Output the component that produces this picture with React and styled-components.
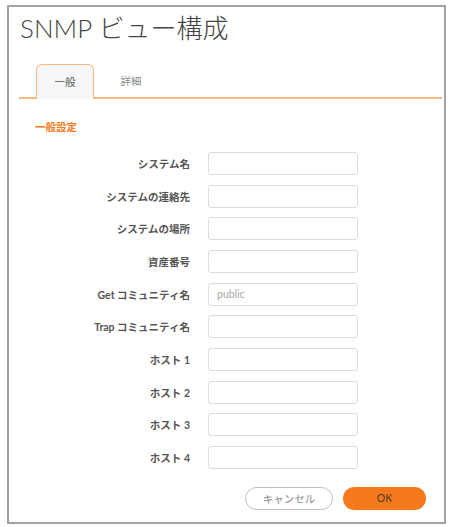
import React from "react";
import styled, { createGlobalStyle } from "styled-components";

const Global = createGlobalStyle`
  html, body { margin: 0; padding: 0; background: #fff; }
  body { font-family: "Lato", "Noto Sans CJK JP", sans-serif; }
`;

const Frame = styled.div`
  box-sizing: border-box;
  margin: 5px 0 0 7px;
  width: 439px;
  height: 519px;
  border: 2px solid #a2a2a2;
  background: #fff;
  display: flex;
  flex-direction: column;
`;

const Title = styled.h1`
  margin: 5px 0 0 11px;
  font-family: "Lato", "Noto Sans CJK JP", sans-serif;
  font-weight: 300;
  font-size: 26px;
  line-height: 32px;
  color: #444;
`;

const TabBar = styled.div`
  margin: 20px 2px 0 10px;
  padding-left: 17px;
  display: flex;
  align-items: flex-end;
  border-bottom: 2px solid #fbb684;
  height: 33px;
`;

const Tab = styled.div`
  box-sizing: border-box;
  width: 58px;
  height: ${(p) => (p.$active ? "35px" : "33px")};
  margin-bottom: ${(p) => (p.$active ? "-2px" : "0")};
  display: flex;
  align-items: center;
  justify-content: center;
  padding-bottom: ${(p) => (p.$active ? "2px" : "0")};
  font-family: "Noto Sans CJK JP", sans-serif;
  font-size: 10.5px;
  color: ${(p) => (p.$active ? "#555" : "#8a8a8a")};
  background: ${(p) => (p.$active ? "#f7f7f7" : "transparent")};
  border: ${(p) => (p.$active ? "1.5px solid #fbb684" : "none")};
  border-bottom: none;
  border-radius: 6px 6px 0 0;
  margin-right: 8px;
`;

const SectionTitle = styled.div`
  margin: 21px 0 0 26px;
  font-family: "Noto Sans CJK JP", sans-serif;
  font-weight: 700;
  font-size: 10.5px;
  line-height: 14px;
  color: #f47b20;
`;

const Form = styled.div`
  margin-top: 18px;
  display: grid;
  grid-template-columns: 181px 150px;
  column-gap: 18px;
  row-gap: 9.67px;
  align-items: center;
`;

const Label = styled.label`
  text-align: right;
  font-family: "Lato", "Noto Sans CJK JP", sans-serif;
  font-weight: 700;
  font-size: 10.5px;
  color: #555;
  white-space: nowrap;
`;

const Input = styled.input`
  box-sizing: border-box;
  width: 150px;
  height: 23px;
  border: 1px solid #dcdcdc;
  border-radius: 3px;
  padding: 0 8px;
  font-family: "Lato", "Noto Sans CJK JP", sans-serif;
  font-size: 10.5px;
  color: #444;
  background: #fff;
  outline: none;
  &::placeholder { color: #a8a8a8; }
`;

const Footer = styled.div`
  margin-top: 18px;
  padding-right: 18px;
  display: flex;
  justify-content: flex-end;
  gap: 10px;
`;

const Button = styled.button`
  box-sizing: border-box;
  width: ${(p) => (p.$primary ? "83px" : "88px")};
  height: 23px;
  border-radius: 12px;
  border: ${(p) => (p.$primary ? "none" : "1px solid #bdbdbd")};
  background: ${(p) => (p.$primary ? "#f57a1c" : "#fff")};
  color: ${(p) => (p.$primary ? "#4a3a30" : "#8a8a8a")};
  font-family: "Lato", "Noto Sans CJK JP", sans-serif;
  font-size: 10.5px;
  padding: 0;
  cursor: pointer;
`;

const fields = [
  ["システム名", ""],
  ["システムの連絡先", ""],
  ["システムの場所", ""],
  ["資産番号", ""],
  ["Get コミュニティ名", "public"],
  ["Trap コミュニティ名", ""],
  ["ホスト 1", ""],
  ["ホスト 2", ""],
  ["ホスト 3", ""],
  ["ホスト 4", ""],
];

export default function App() {
  return (
    <>
      <Global />
      <Frame>
        <Title>SNMP ビュー構成</Title>
        <TabBar>
          <Tab $active>一般</Tab>
          <Tab>詳細</Tab>
        </TabBar>
        <SectionTitle>一般設定</SectionTitle>
        <Form>
          {fields.map(([label, ph]) => (
            <React.Fragment key={label}>
              <Label>{label}</Label>
              <Input placeholder={ph} />
            </React.Fragment>
          ))}
        </Form>
        <Footer>
          <Button>キャンセル</Button>
          <Button $primary>OK</Button>
        </Footer>
      </Frame>
    </>
  );
}
